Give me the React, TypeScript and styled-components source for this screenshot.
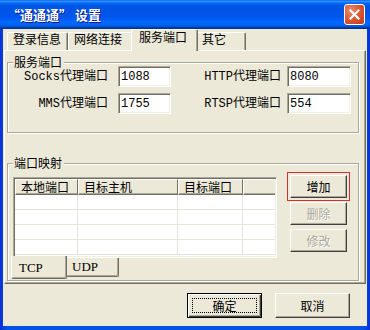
import React from "react";
import styled, { createGlobalStyle } from "styled-components";

const GlobalStyle = createGlobalStyle`
  html, body {
    margin: 0;
    padding: 0;
    background: #ffffff;
  }
  body {
    font-family: "Liberation Mono", "Noto Sans CJK SC", monospace;
    font-size: 12px;
    color: #000;
  }
`;

const Window = styled.div`
  width: 370px;
  height: 330px;
  display: flex;
  flex-direction: column;
  background: linear-gradient(to right, #0831d9 0%, #0553e6 2%, #0553e6 98%, #0831d9 100%);
  box-sizing: border-box;
`;

const TitleBar = styled.div`
  height: 29px;
  flex: none;
  display: flex;
  align-items: center;
  justify-content: space-between;
  padding: 0 5px 0 7px;
  background: linear-gradient(
    to bottom,
    #0058ee 0%,
    #3593ff 4%,
    #288eff 6%,
    #127dff 8%,
    #036ffc 10%,
    #0262ee 14%,
    #0057e5 20%,
    #0054e3 24%,
    #0055eb 56%,
    #005bf5 66%,
    #026afe 76%,
    #0062ef 86%,
    #0052d6 92%,
    #0040ab 94%,
    #003092 100%
  );
`;

const Title = styled.span`
  font-family: "Noto Sans CJK SC", sans-serif;
  font-weight: bold;
  font-size: 13px;
  color: #fff;
  text-shadow: 1px 1px 0 #0a1883;
  line-height: 16px;
`;

const CloseButton = styled.div`
  width: 21px;
  height: 21px;
  box-sizing: border-box;
  border: 1px solid #fff;
  border-radius: 3px;
  background: radial-gradient(circle at 30% 30%, #ec8c6c 0%, #dc5a34 45%, #c2391a 100%);
  display: flex;
  align-items: center;
  justify-content: center;
`;

const Body = styled.div`
  flex: 1;
  margin: 0 3px 4px 3px;
  background: #ece9d8;
  display: flex;
  flex-direction: column;
`;

const TabStrip = styled.div`
  height: 21px;
  flex: none;
  display: flex;
  align-items: flex-end;
  padding-left: 4px;
`;

const Tab = styled.div<{ $active?: boolean; $width: number }>`
  box-sizing: border-box;
  width: ${(p) => p.$width + (p.$active ? 4 : 0)}px;
  height: ${(p) => (p.$active ? "22px" : "18px")};
  margin: ${(p) => (p.$active ? "0 -2px -1px -2px" : "0")};
  padding: ${(p) => (p.$active ? "1px 0 0 7px" : "0 0 0 5px")};
  position: relative;
  z-index: ${(p) => (p.$active ? 1 : 0)};
  background: #ece9d8;
  border-top: 1px solid #fff;
  border-left: 1px solid #fff;
  border-right: 1px solid #716f64;
  border-radius: 2px 2px 0 0;
  box-shadow: inset -1px 0 0 #aca899;
  line-height: 17px;
  white-space: nowrap;
`;

const TabPanel = styled.div`
  height: 234px;
  flex: none;
  box-sizing: border-box;
  margin: 0 1px;
  padding: 0 6px 0 2px;
  border: 1px solid;
  border-color: #fff #716f64 #716f64 #fff;
  box-shadow: inset -1px -1px 0 #aca899;
  display: flex;
  flex-direction: column;
`;

const GroupBox = styled.div<{ $top: number }>`
  position: relative;
  margin-top: ${(p) => p.$top}px;
  border: 1px solid #aca899;
  box-shadow: inset 1px 1px 0 #fff, 1px 1px 0 #fff;
`;

const Caption = styled.span`
  position: absolute;
  top: -8px;
  left: 5px;
  padding: 0 2px 0 1px;
  background: #ece9d8;
  line-height: 14px;
  font-family: "Noto Sans CJK SC", sans-serif;
`;

const FieldGrid = styled.div`
  display: grid;
  grid-template-columns: 110px 53px 116px 64px;
  grid-auto-rows: 21px;
  row-gap: 6px;
  align-items: center;
  padding: 3px 0 18px 0;
`;

const FieldLabel = styled.label<{ $gap: number }>`
  text-align: right;
  padding-right: ${(p) => p.$gap}px;
  white-space: nowrap;
  line-height: 14px;
`;

const TextBox = styled.input`
  box-sizing: border-box;
  width: 100%;
  height: 21px;
  margin: 0;
  padding: 0 2px;
  font: inherit;
  color: #000;
  background: #fff;
  border: 1px solid;
  border-color: #aca899 #fff #fff #aca899;
  box-shadow: inset 1px 1px 0 #716f64, inset -1px -1px 0 #f1efe2;
  outline: none;
`;

const MapRow = styled.div`
  display: flex;
  align-items: flex-start;
  padding: 11px 0 1px 5px;
`;

const ListArea = styled.div`
  width: 264px;
  margin-top: 2px;
  display: flex;
  flex-direction: column;
`;

const ListView = styled.div`
  height: 81px;
  box-sizing: border-box;
  background: #fff;
  border: 1px solid;
  border-color: #aca899 #fff #fff #aca899;
  box-shadow: inset 1px 1px 0 #716f64, inset -1px -1px 0 #f1efe2;
  padding: 1px;
  overflow: hidden;
`;

const ListGrid = styled.div`
  display: grid;
  grid-template-columns: 63px 100px 65px 1fr;
  grid-template-rows: 16px;
  grid-auto-rows: 15px;
`;

const HeaderCell = styled.div<{ $last?: boolean }>`
  box-sizing: border-box;
  background: #ece9d8;
  border-top: 1px solid #fff;
  border-left: 1px solid #fff;
  border-bottom: 1px solid #716f64;
  border-right: ${(p) => (p.$last ? "none" : "1px solid #716f64")};
  box-shadow: inset 0 -1px 0 #aca899;
  padding-left: 5px;
  font-family: "Noto Sans CJK SC", sans-serif;
  line-height: 13px;
  white-space: nowrap;
  overflow: hidden;
`;

const Cell = styled.div<{ $last?: boolean }>`
  box-sizing: border-box;
  border-bottom: 1px solid #e4e3dc;
  border-right: ${(p) => (p.$last ? "none" : "1px solid #e4e3dc")};
`;

const BottomTabs = styled.div`
  display: flex;
  align-items: flex-start;
`;

const BottomTab = styled.div<{ $active?: boolean }>`
  box-sizing: border-box;
  position: relative;
  z-index: ${(p) => (p.$active ? 1 : 0)};
  min-width: ${(p) => (p.$active ? "56px" : "53px")};
  height: ${(p) => (p.$active ? "23px" : "19px")};
  margin: ${(p) => (p.$active ? "-2px -2px 0 -2px" : "0 0 0 1px")};
  padding: ${(p) => (p.$active ? "4px 0 0 7px" : "1px 0 0 5px")};
  background: #ece9d8;
  border-left: 1px solid #fff;
  border-right: 1px solid #716f64;
  border-bottom: 1px solid #716f64;
  border-radius: 0 0 2px 2px;
  box-shadow: inset -1px -1px 0 #aca899;
  font-family: "Liberation Serif", serif;
  font-size: 13px;
  line-height: 15px;
`;

const SideButtons = styled.div`
  margin-left: 13px;
  display: flex;
  flex-direction: column;
  gap: 4px;
`;

const Button = styled.button<{ $width: number; $height: number; $highlight?: boolean }>`
  box-sizing: border-box;
  width: ${(p) => p.$width}px;
  height: ${(p) => p.$height}px;
  margin: 0;
  padding: 0;
  font-family: "Noto Sans CJK SC", sans-serif;
  font-size: 12px;
  line-height: 14px;
  color: #000;
  background: #ece9d8;
  border: 1px solid;
  border-color: #fff #404040 #404040 #fff;
  box-shadow: inset -1px -1px 0 #aca899;
  outline: ${(p) => (p.$highlight ? "1px solid #d0312d" : "none")};
  outline-offset: 2px;
  display: flex;
  align-items: center;
  justify-content: center;

  &:disabled {
    color: #aca899;
    text-shadow: 1px 1px 0 #fff;
  }
`;

const DefaultButton = styled(Button)`
  border: 1px solid #000;
  box-shadow: inset 1px 1px 0 #fff, inset -1px -1px 0 #404040, inset -2px -2px 0 #aca899;
  padding: 4px;
`;

const FocusRing = styled.span`
  flex: 1;
  align-self: stretch;
  border: 1px dotted #000;
  display: flex;
  align-items: center;
  justify-content: center;
`;

const Footer = styled.div`
  flex: 1;
  display: flex;
  justify-content: flex-end;
  align-items: flex-start;
  gap: 13px;
  padding: 9px 17px 0 0;
`;

const tabs = [
  { name: "登录信息", width: 61 },
  { name: "网络连接", width: 65 },
  { name: "服务端口", width: 63 },
  { name: "其它", width: 50 },
];

const fields = [
  { label: "Socks代理端口", value: "1088", label2: "HTTP代理端口", value2: "8080" },
  { label: "MMS代理端口", value: "1755", label2: "RTSP代理端口", value2: "554" },
];

const columns = ["本地端口", "目标主机", "目标端口", ""];

export default function App() {
  return (
    <>
      <GlobalStyle />
      <Window>
        <TitleBar>
          <Title>“通通通” 设置</Title>
          <CloseButton>
            <svg width="11" height="11" viewBox="0 0 11 11">
              <path d="M1.5 1.5 L9.5 9.5 M9.5 1.5 L1.5 9.5" stroke="#fff" strokeWidth="2.2" strokeLinecap="square" />
            </svg>
          </CloseButton>
        </TitleBar>
        <Body>
          <TabStrip>
            {tabs.map((t) => (
              <Tab key={t.name} $width={t.width} $active={t.name === "服务端口"}>
                {t.name}
              </Tab>
            ))}
          </TabStrip>
          <TabPanel>
            <GroupBox $top={11}>
              <Caption>服务端口</Caption>
              <FieldGrid>
                {fields.map((f) => (
                  <React.Fragment key={f.label}>
                    <FieldLabel $gap={10}>{f.label}</FieldLabel>
                    <TextBox defaultValue={f.value} readOnly />
                    <FieldLabel $gap={6}>{f.label2}</FieldLabel>
                    <TextBox defaultValue={f.value2} readOnly />
                  </React.Fragment>
                ))}
              </FieldGrid>
            </GroupBox>
            <GroupBox $top={30}>
              <Caption>端口映射</Caption>
              <MapRow>
                <ListArea>
                  <ListView>
                    <ListGrid>
                      {columns.map((c, i) => (
                        <HeaderCell key={i} $last={i === columns.length - 1}>
                          {c}
                        </HeaderCell>
                      ))}
                      {[0, 1, 2, 3].map((r) =>
                        columns.map((_, i) => <Cell key={`${r}-${i}`} $last={i === columns.length - 1} />)
                      )}
                    </ListGrid>
                  </ListView>
                  <BottomTabs>
                    <BottomTab $active>TCP</BottomTab>
                    <BottomTab>UDP</BottomTab>
                  </BottomTabs>
                </ListArea>
                <SideButtons>
                  <Button $width={57} $height={23} $highlight>
                    增加
                  </Button>
                  <Button $width={57} $height={23} disabled>
                    删除
                  </Button>
                  <Button $width={57} $height={23} disabled>
                    修改
                  </Button>
                </SideButtons>
              </MapRow>
            </GroupBox>
          </TabPanel>
          <Footer>
            <DefaultButton $width={75} $height={25}>
              <FocusRing>确定</FocusRing>
            </DefaultButton>
            <Button $width={75} $height={25}>
              取消
            </Button>
          </Footer>
        </Body>
      </Window>
    </>
  );
}
